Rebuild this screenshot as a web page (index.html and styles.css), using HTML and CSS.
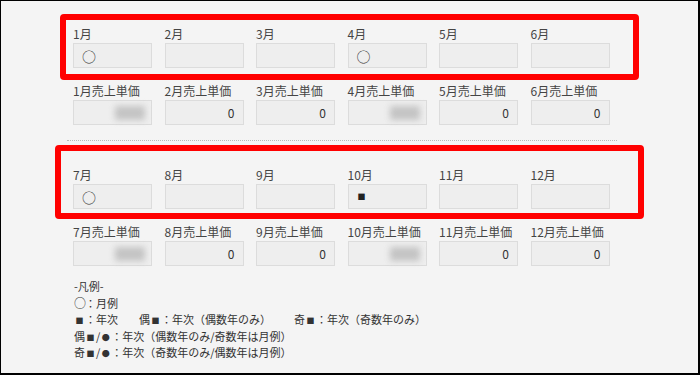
FILE: index.html
```html
<!DOCTYPE html>
<html lang="ja">
<head>
    <meta charset="UTF-8">
    <title>月例設定</title>
    <link rel="stylesheet" href="styles.css">
</head>
<body>
    <div class="frame">
        <!-- 1月〜6月 -->
        <div class="section first">
            <div class="row">
                <div class="field"><label>1月</label><div class="box"><span class="mark">○</span></div></div>
                <div class="field"><label>2月</label><div class="box"></div></div>
                <div class="field"><label>3月</label><div class="box"></div></div>
                <div class="field"><label>4月</label><div class="box"><span class="mark">○</span></div></div>
                <div class="field"><label>5月</label><div class="box"></div></div>
                <div class="field"><label>6月</label><div class="box"></div></div>
            </div>
            <div class="row">
                <div class="field"><label>1月売上単価</label><div class="box num"><span class="blur"></span></div></div>
                <div class="field"><label>2月売上単価</label><div class="box num">0</div></div>
                <div class="field"><label>3月売上単価</label><div class="box num">0</div></div>
                <div class="field"><label>4月売上単価</label><div class="box num"><span class="blur"></span></div></div>
                <div class="field"><label>5月売上単価</label><div class="box num">0</div></div>
                <div class="field"><label>6月売上単価</label><div class="box num">0</div></div>
            </div>
        </div>

        <div class="sep"></div>

        <!-- 7月〜12月 -->
        <div class="section">
            <div class="row">
                <div class="field"><label>7月</label><div class="box"><span class="mark">○</span></div></div>
                <div class="field"><label>8月</label><div class="box"></div></div>
                <div class="field"><label>9月</label><div class="box"></div></div>
                <div class="field"><label>10月</label><div class="box"><span class="mark sq">■</span></div></div>
                <div class="field"><label>11月</label><div class="box"></div></div>
                <div class="field"><label>12月</label><div class="box"></div></div>
            </div>
            <div class="row">
                <div class="field"><label>7月売上単価</label><div class="box num"><span class="blur"></span></div></div>
                <div class="field"><label>8月売上単価</label><div class="box num">0</div></div>
                <div class="field"><label>9月売上単価</label><div class="box num">0</div></div>
                <div class="field"><label>10月売上単価</label><div class="box num"><span class="blur"></span></div></div>
                <div class="field"><label>11月売上単価</label><div class="box num">0</div></div>
                <div class="field"><label>12月売上単価</label><div class="box num">0</div></div>
            </div>
        </div>

        <div class="legend">
            <p>-凡例-</p>
            <p><span class="sym circle">○</span>：月例</p>
            <p><span class="item w1"><span class="sym">■</span>：年次</span><span class="item w2">偶<span class="sym">■</span>：年次（偶数年のみ）</span><span class="item">奇<span class="sym">■</span>：年次（奇数年のみ）</span></p>
            <p>偶<span class="sym">■</span>/<span class="sym">●</span>：年次（偶数年のみ/奇数年は月例）</p>
            <p>奇<span class="sym">■</span>/<span class="sym">●</span>：年次（奇数年のみ/偶数年は月例）</p>
        </div>

        <!-- 赤枠の注釈 -->
        <div class="highlight hl-top"></div>
        <div class="highlight hl-bottom"></div>
    </div>
</body>
</html>
```

FILE: styles.css
```css
body {
    margin: 0;
    background: #fff;
    font-family: "Noto Sans CJK JP", "Noto Sans", sans-serif;
    color: #444;
}

.frame {
    position: relative;
    box-sizing: border-box;
    width: 700px;
    height: 375px;
    background: #f4f4f4;
    border: 1px solid #000;
    border-right-width: 2px;
    border-bottom-width: 2px;
    overflow: hidden;
}

.section {
    padding: 25px 0 0 72px;
}

.section.first {
    padding-top: 24px;
    padding-bottom: 15px;
}

.row {
    display: grid;
    grid-template-columns: repeat(6, 79px);
    column-gap: 12.5px;
    margin-bottom: 14px;
}

.row:last-child {
    margin-bottom: 0;
}

.field label {
    display: block;
    height: 18px;
    font-size: 12px;
    line-height: 18px;
    color: #444;
}

.box {
    box-sizing: border-box;
    height: 25px;
    background: #eeeeee;
    border: 1px solid #dcdcdc;
    display: flex;
    align-items: center;
    padding: 0 8px;
    font-size: 12px;
    color: #333;
}

.box.num {
    justify-content: flex-end;
}

.mark {
    font-size: 14px;
    line-height: 1;
    color: #333;
}

.mark.sq {
    font-size: 8px;
    color: #222;
    margin-left: 1px;
}

.blur {
    width: 30px;
    height: 14px;
    margin-right: -2px;
    background: #c4c4c4;
    filter: blur(3px);
}

.sep {
    margin-left: 66px;
    width: 550px;
    border-top: 1px dotted #b8b8b8;
}

.legend {
    margin: 12px 0 0 73px;
    font-size: 11px;
    line-height: 16.5px;
    color: #333;
}

.legend p {
    margin: 0;
    height: 16.5px;
    white-space: nowrap;
}

.legend .sym {
    display: inline-block;
    width: 11px;
    font-size: 8px;
    line-height: 1;
    text-align: center;
}

.legend .circle {
    font-size: 12px;
}

.legend .item {
    display: inline-block;
}

.legend .w1 {
    width: 65px;
}

.legend .w2 {
    width: 155px;
}

/* red annotation frames over the form */
.highlight {
    position: absolute;
    border: 6px solid #ff0000;
    border-radius: 4px;
    box-sizing: border-box;
}

.hl-top {
    left: 59px;
    top: 13px;
    width: 579px;
    height: 66px;
}

.hl-bottom {
    left: 54px;
    top: 144px;
    width: 589px;
    height: 74px;
}
```
